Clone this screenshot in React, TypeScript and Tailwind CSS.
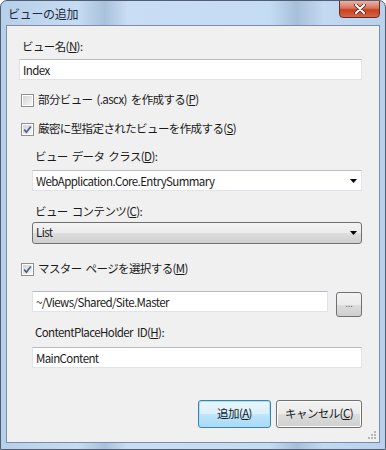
import React from "react";

function Check({ checked }: { checked?: boolean }) {
  return (
    <span className="w-[13px] h-[13px] shrink-0 border border-[#8e8f8f] bg-white p-px flex">
      <span className="flex-1 bg-[linear-gradient(135deg,#d4d4d4,#f6f6f6)] flex items-center justify-center">
        {checked && (
          <svg width="9" height="9" viewBox="0 0 9 9">
            <path d="M1.2 4.6 L3.4 7.2 L7.8 1.4" stroke="#4a5e8c" strokeWidth="1.7" fill="none" />
          </svg>
        )}
      </span>
    </span>
  );
}

function Arrow() {
  return (
    <svg width="7" height="4" viewBox="0 0 7 4">
      <path d="M0 0 H7 L3.5 4 Z" fill="#000" />
    </svg>
  );
}

const input =
  "h-[21px] bg-white border border-[#e2e3ea] border-t-[#b9bcc2] flex items-center px-[3px] leading-[16px]";

export default function App() {
  return (
    <div className="w-[386px] h-[450px] font-['Noto_Sans_CJK_JP','Noto_Sans',sans-serif] text-[11.5px] tracking-[-0.6px] [word-spacing:2px] text-[#1a1a1a]">
      <div className="relative w-full h-full rounded-t-[7px] border border-[#4f5e72] bg-[linear-gradient(90deg,#b7cfe9_0%,#c6dcf3_20%,#a9c1dc_27%,#c9def5_33%,#c4dbf4_70%,#a8bfda_77%,#c3d9f2_84%,#b9d1ec_100%)] overflow-hidden">
        <div className="h-[24px] flex items-center pl-[7px] pt-[1px] text-[12px] tracking-[-0.3px] text-[#1c2a3a]">ビューの追加</div>
        <div className="absolute top-[-1px] right-[5px] w-[41px] h-[18px] rounded-b-[4px] border border-[#6b2a1e] bg-[linear-gradient(180deg,#eab2a4_0%,#d8735c_45%,#c5401f_55%,#d5654a_100%)] flex items-center justify-center">
          <svg width="12" height="10" viewBox="0 0 12 10">
            <path d="M2 1 L10 9 M10 1 L2 9" stroke="#5a2418" strokeWidth="3.6" strokeLinecap="round" />
            <path d="M2 1 L10 9 M10 1 L2 9" stroke="#ffffff" strokeWidth="2" strokeLinecap="round" />
          </svg>
        </div>
        <div className="mx-[5px] h-[418px] border border-[#7d8ea3] bg-[#f0f0f0] relative">
          <div className="pl-[12px] pr-[17px] flex flex-col">
            <div className="mt-[12px] ml-[3px] leading-[16px]">
              ビュー名(<u>N</u>):
            </div>
            <div className={`mt-[5px] ${input}`}>Index</div>

            <div className="mt-[12px] ml-[2px] flex items-center gap-[4px] h-[16px]">
              <Check />
              <span>
                部分ビュー (.ascx) を作成する(<u>P</u>)
              </span>
            </div>
            <div className="mt-[13px] ml-[2px] flex items-center gap-[4px] h-[16px]">
              <Check checked />
              <span>
                厳密に型指定されたビューを作成する(<u>S</u>)
              </span>
            </div>

            <div className="ml-[13px] flex flex-col">
              <div className="mt-[11px] ml-[3px] leading-[16px]">
                ビュー データ クラス(<u>D</u>):
              </div>
              <div className={`mt-[6px] ${input} justify-between pr-[4px]`}>
                <span>WebApplication.Core.EntrySummary</span>
                <Arrow />
              </div>
              <div className="mt-[12px] ml-[3px] leading-[16px]">
                ビュー コンテンツ(<u>C</u>):
              </div>
              <div className="mt-[3px] h-[22px] rounded-[3px] border border-[#707070] bg-[linear-gradient(180deg,#f3f3f3_0%,#ebebeb_50%,#dddddd_51%,#cfcfcf_100%)] flex items-center justify-between pl-[3px] pr-[4px]">
                <span>List</span>
                <Arrow />
              </div>
            </div>

            <div className="mt-[17px] ml-[2px] flex items-center gap-[4px] h-[16px]">
              <Check checked />
              <span>
                マスター ページを選択する(<u>M</u>)
              </span>
            </div>

            <div className="ml-[13px] flex flex-col">
              <div className="mt-[14px] flex items-start gap-[8px]">
                <div className={`flex-1 ${input} h-[20px]`}>~/Views/Shared/Site.Master</div>
                <div className="mt-px w-[26px] h-[25px] rounded-[3px] border border-[#707070] bg-[linear-gradient(180deg,#f3f3f3_0%,#ebebeb_50%,#dddddd_51%,#cfcfcf_100%)] flex items-center justify-center text-[9px] tracking-normal text-[#6b6b7b] leading-none pb-[2px]">
                  ...
                </div>
              </div>
              <div className="mt-[7px] ml-[3px] leading-[16px]">
                ContentPlaceHolder ID(<u>H</u>):
              </div>
              <div className={`mt-[7px] ${input}`}>MainContent</div>
            </div>

            <div className="mt-[32px] flex justify-end gap-[5px]">
              <div className="w-[73px] h-[28px] rounded-[3px] border border-[#3c7fb1] shadow-[inset_0_0_0_1px_#a6e1f7] bg-[linear-gradient(180deg,#eaf6fd_0%,#d9f0fc_50%,#bee6fd_51%,#a7d9f5_100%)] flex items-center justify-center">
                追加(<u>A</u>)
              </div>
              <div className="w-[86px] h-[28px] rounded-[3px] border border-[#707070] shadow-[inset_0_0_0_1px_#fcfcfc] bg-[linear-gradient(180deg,#f2f2f2_0%,#ebebeb_50%,#dddddd_51%,#cfcfcf_100%)] flex items-center justify-center">
                キャンセル(<u>C</u>)
              </div>
            </div>
          </div>
          <svg className="absolute right-[2px] bottom-[2px]" width="10" height="10" viewBox="0 0 10 10">
            <g fill="#b8b8b8">
              <rect x="7" y="1" width="2" height="2" />
              <rect x="4" y="4" width="2" height="2" />
              <rect x="7" y="4" width="2" height="2" />
              <rect x="1" y="7" width="2" height="2" />
              <rect x="4" y="7" width="2" height="2" />
              <rect x="7" y="7" width="2" height="2" />
            </g>
          </svg>
        </div>
      </div>
    </div>
  );
}
